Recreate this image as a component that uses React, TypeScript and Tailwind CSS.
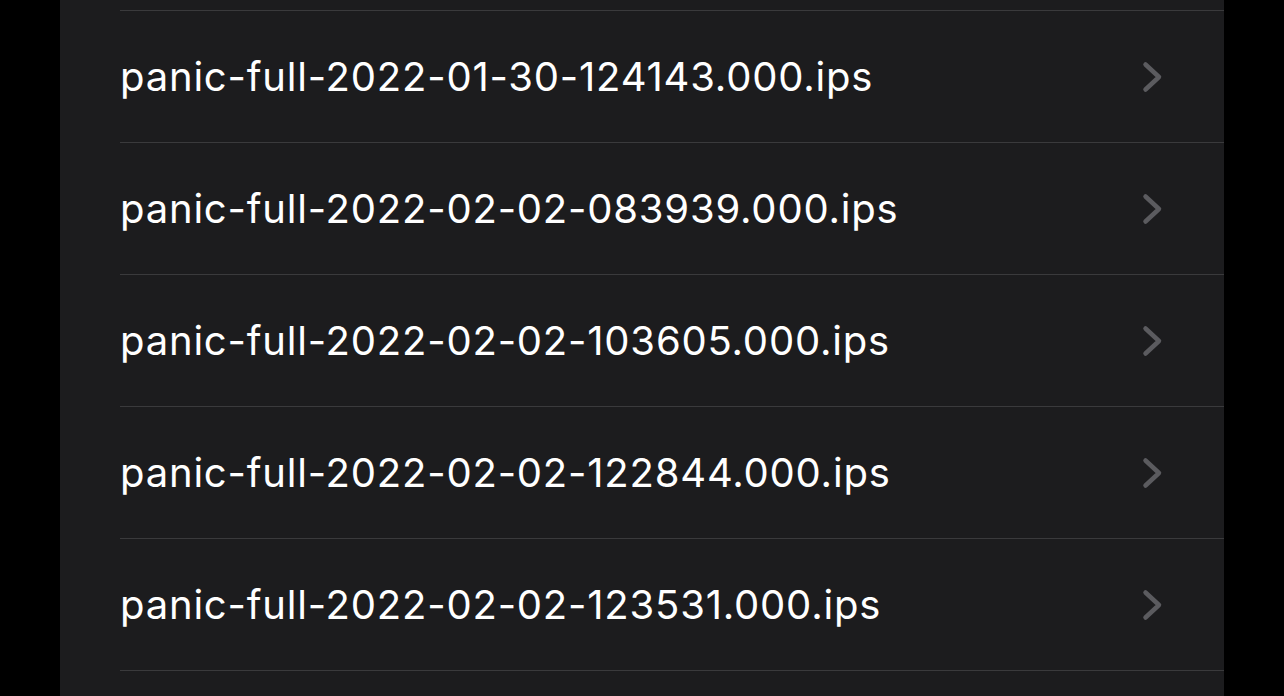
const files = [
  "panic-full-2022-01-30-124143.000.ips",
  "panic-full-2022-02-02-083939.000.ips",
  "panic-full-2022-02-02-103605.000.ips",
  "panic-full-2022-02-02-122844.000.ips",
  "panic-full-2022-02-02-123531.000.ips",
];

function Chevron() {
  return (
    <svg width="24" height="34" viewBox="0 0 24 34" fill="none">
      <polyline
        points="3.5,4.5 17,17 3.5,29.5"
        stroke="#5b5b5f"
        strokeWidth="4.5"
        strokeLinecap="round"
        strokeLinejoin="round"
      />
    </svg>
  );
}

function FileRow({ name }: { name: string }) {
  return (
    <div className="flex h-[132px] items-center border-t border-[#3a3a3c] pr-[58px]">
      <span className="flex-1 text-[40px] leading-none tracking-[0.8px] text-white">
        {name}
      </span>
      <Chevron />
    </div>
  );
}

export default function App() {
  return (
    <div
      className="flex h-[696px] w-[1284px] overflow-hidden bg-black"
      style={{ fontFamily: "Inter, 'Noto Sans', sans-serif" }}
    >
      <div className="ml-[60px] w-[1164px] bg-[#1c1c1e]">
        <div className="ml-[60px] mt-[10px] border-b border-[#3a3a3c]">
          {files.map((f) => (
            <FileRow key={f} name={f} />
          ))}
        </div>
      </div>
    </div>
  );
}
